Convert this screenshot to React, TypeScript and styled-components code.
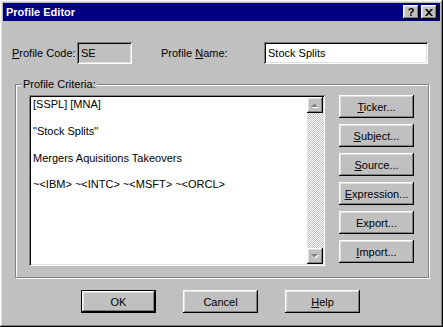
import styled, { createGlobalStyle } from 'styled-components';

const GlobalStyle = createGlobalStyle`
  html, body {
    margin: 0;
    padding: 0;
    background: #c0c0c0;
  }
  body {
    font-family: "Liberation Sans", Arial, sans-serif;
    font-size: 11px;
    color: #000;
  }
`;

const raised = `
  box-shadow: inset -1px -1px 0 #000, inset 1px 1px 0 #fff,
    inset -2px -2px 0 #808080, inset 2px 2px 0 #dfdfdf;
`;

const sunken = `
  box-shadow: inset 1px 1px 0 #808080, inset -1px -1px 0 #fff,
    inset 2px 2px 0 #000, inset -2px -2px 0 #dfdfdf;
`;

const Window = styled.div`
  width: 443px;
  height: 327px;
  box-sizing: border-box;
  padding: 3px;
  background: #c0c0c0;
  display: flex;
  flex-direction: column;
  ${raised}
`;

const TitleBar = styled.div`
  height: 18px;
  background: #000080;
  display: flex;
  align-items: center;
  justify-content: space-between;
  padding: 0 3px 0 3px;
`;

const Title = styled.span`
  color: #fff;
  font-weight: bold;
  font-size: 11px;
`;

const Controls = styled.div`
  display: flex;
  gap: 2px;
`;

const CtrlButton = styled.div`
  width: 16px;
  height: 14px;
  background: #c0c0c0;
  display: flex;
  align-items: center;
  justify-content: center;
  font-weight: bold;
  font-size: 11px;
  line-height: 1;
  ${raised}
`;

const Body = styled.div`
  flex: 1;
  display: flex;
  flex-direction: column;
  padding: 21px 11px 0 9px;
`;

const FieldRow = styled.div`
  display: flex;
  align-items: center;
  height: 22px;
`;

const FieldLabel = styled.label<{ $width: number; $offset?: number }>`
  width: ${p => p.$width}px;
  margin-left: ${p => p.$offset ?? 0}px;
  white-space: nowrap;
`;

const TextBox = styled.div<{ $width: number; $disabled?: boolean }>`
  width: ${p => p.$width}px;
  height: 22px;
  box-sizing: border-box;
  padding: 3px 4px;
  background: ${p => (p.$disabled ? '#c0c0c0' : '#fff')};
  line-height: 16px;
  ${sunken}
`;

const GroupBox = styled.div`
  position: relative;
  margin: 20px 0 0 3px;
  width: 414px;
  height: 194px;
  box-sizing: border-box;
  border: 1px solid #808080;
  box-shadow: 1px 1px 0 #fff, inset 1px 1px 0 #fff;
  display: flex;
  gap: 14px;
  padding: 10px 0 0 13px;
`;

const Legend = styled.span`
  position: absolute;
  top: -7px;
  left: 6px;
  padding: 0 1px;
  background: #c0c0c0;
  line-height: 13px;
`;

const ListBox = styled.div`
  width: 296px;
  height: 171px;
  box-sizing: border-box;
  background: #fff;
  padding: 2px;
  display: flex;
  ${sunken}
`;

const ListText = styled.div`
  flex: 1;
  padding: 1px 2px;
  line-height: 13.4px;
`;

const Entry = styled.div`
  margin-bottom: 13.4px;
  white-space: nowrap;
`;

const ScrollBar = styled.div`
  width: 16px;
  display: flex;
  flex-direction: column;
  justify-content: space-between;
  background-color: #fff;
  background-image: conic-gradient(#c0c0c0 25%, #fff 0 50%, #c0c0c0 0 75%, #fff 0);
  background-size: 2px 2px;
`;

const ArrowButton = styled.div`
  width: 16px;
  height: 16px;
  background: #c0c0c0;
  display: flex;
  align-items: center;
  justify-content: center;
  ${raised}
`;

const ButtonColumn = styled.div`
  display: flex;
  flex-direction: column;
  gap: 6px;
`;

const Button = styled.button<{ $default?: boolean }>`
  width: 75px;
  height: 23px;
  padding: 0;
  border: ${p => (p.$default ? '1px solid #000' : 'none')};
  background: #c0c0c0;
  font-family: inherit;
  font-size: 11px;
  color: #000;
  ${raised}
`;

const Footer = styled.div`
  display: flex;
  justify-content: center;
  gap: 27px;
  margin-top: 12px;
`;

function Arrow({ up }: { up?: boolean }) {
  return (
    <svg width="8" height="5" viewBox="0 0 8 5">
      <polygon points={up ? '4.5,1.5 8,5 1,5' : '1,1 8,1 4.5,4.5'} fill="#fff" />
      <polygon points={up ? '3.5,0.5 7,4 0,4' : '0,0 7,0 3.5,3.5'} fill="#808080" />
    </svg>
  );
}

export default function App() {
  return (
    <>
      <GlobalStyle />
      <Window>
        <TitleBar>
          <Title>Profile Editor</Title>
          <Controls>
            <CtrlButton>?</CtrlButton>
            <CtrlButton>
              <svg width="8" height="7" viewBox="0 0 8 7">
                <path d="M0 0h2l2 2.2L6 0h2L5 3.5 8 7H6L4 4.8 2 7H0l3-3.5z" fill="#000" />
              </svg>
            </CtrlButton>
          </Controls>
        </TitleBar>
        <Body>
          <FieldRow>
            <FieldLabel $width={65}>
              <u>P</u>rofile Code:
            </FieldLabel>
            <TextBox $width={55} $disabled>
              SE
            </TextBox>
            <FieldLabel $width={103} $offset={29}>
              Profile <u>N</u>ame:
            </FieldLabel>
            <TextBox $width={164}>Stock Splits</TextBox>
          </FieldRow>
          <GroupBox>
            <Legend>Profile Criteria:</Legend>
            <ListBox>
              <ListText>
                <Entry>[SSPL] [MNA]</Entry>
                <Entry>"Stock Splits"</Entry>
                <Entry>Mergers Aquisitions Takeovers</Entry>
                <Entry>~&lt;IBM&gt; ~&lt;INTC&gt; ~&lt;MSFT&gt; ~&lt;ORCL&gt;</Entry>
              </ListText>
              <ScrollBar>
                <ArrowButton>
                  <Arrow up />
                </ArrowButton>
                <ArrowButton>
                  <Arrow />
                </ArrowButton>
              </ScrollBar>
            </ListBox>
            <ButtonColumn>
              <Button>
                <u>T</u>icker...
              </Button>
              <Button>
                <u>S</u>ubject...
              </Button>
              <Button>
                <u>S</u>ource...
              </Button>
              <Button>
                <u>E</u>xpression...
              </Button>
              <Button>Export...</Button>
              <Button>
                <u>I</u>mport...
              </Button>
            </ButtonColumn>
          </GroupBox>
          <Footer>
            <Button $default>OK</Button>
            <Button>Cancel</Button>
            <Button>
              <u>H</u>elp
            </Button>
          </Footer>
        </Body>
      </Window>
    </>
  );
}
